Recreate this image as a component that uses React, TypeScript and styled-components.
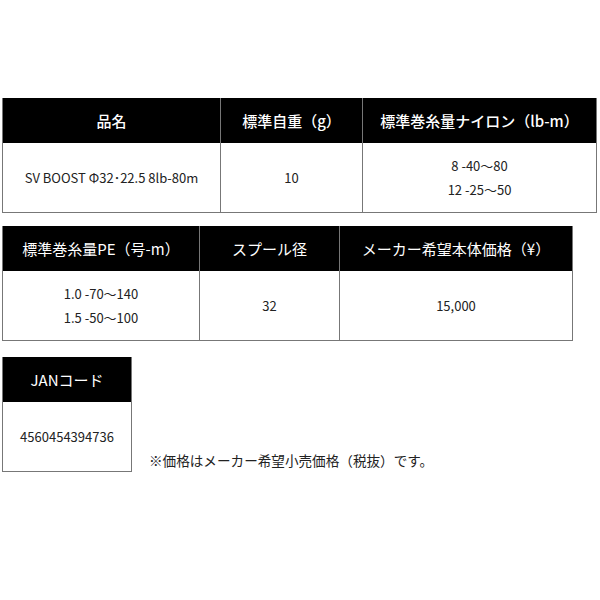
import React from 'react';
import styled, { createGlobalStyle } from 'styled-components';

const GlobalStyle = createGlobalStyle`
    html, body {
        margin: 0;
        padding: 0;
        background: #fff;
    }
    body {
        font-family: 'Noto Sans CJK JP', 'Noto Sans', sans-serif;
        color: #222;
    }
`;

const Page = styled('div')((): any => ({
    width: '600px',
    height: '600px',
    boxSizing: 'border-box',
    padding: '98px 0 0 2px',
    display: 'flex',
    flexDirection: 'column',
}));

const SpecTable = styled('table')<{ $width: number; $gap: number }>((p): any => ({
    width: `${p.$width}px`,
    borderCollapse: 'collapse',
    tableLayout: 'fixed',
    marginBottom: `${p.$gap}px`,
}));

const HeadCell = styled('th')<{ $bold?: boolean }>((p): any => ({
    height: '45px',
    padding: 0,
    background: '#000',
    color: '#fff',
    fontSize: '15px',
    fontWeight: p.$bold ? 500 : 400,
    textAlign: 'center',
    borderLeft: '1px solid #777',
    borderRight: '1px solid #777',
}));

const BodyCell = styled('td')((): any => ({
    height: '69px',
    padding: 0,
    fontSize: '13px',
    lineHeight: '24px',
    textAlign: 'center',
    border: '1px solid #777',
    borderTop: 'none',
}));

const BottomRow = styled('div')((): any => ({
    display: 'flex',
    alignItems: 'flex-end',
    gap: '17px',
}));

const Note = styled('p')((): any => ({
    margin: '0 0 2px',
    fontSize: '13.6px',
    lineHeight: '20px',
    color: '#222',
}));

function Lines({ items }: { items: string[] }): React.ReactElement {
    return (
        <>
            {items.map((t, i) => (
                <div key={i}>{t}</div>
            ))}
        </>
    );
}

function App(): React.ReactElement {
    return (
        <Page>
            <GlobalStyle />
            <SpecTable $width={594} $gap={13}>
                <colgroup>
                    <col style={{ width: '218px' }} />
                    <col style={{ width: '142px' }} />
                    <col style={{ width: '234px' }} />
                </colgroup>
                <thead>
                    <tr>
                        <HeadCell $bold>品名</HeadCell>
                        <HeadCell $bold>標準自重（g）</HeadCell>
                        <HeadCell $bold>標準巻糸量ナイロン（lb-m）</HeadCell>
                    </tr>
                </thead>
                <tbody>
                    <tr>
                        <BodyCell>SV BOOST Φ32･22.5 8lb-80m</BodyCell>
                        <BodyCell>10</BodyCell>
                        <BodyCell>
                            <Lines items={['8 -40～80', '12 -25～50']} />
                        </BodyCell>
                    </tr>
                </tbody>
            </SpecTable>

            <SpecTable $width={570} $gap={16}>
                <colgroup>
                    <col style={{ width: '197px' }} />
                    <col style={{ width: '140px' }} />
                    <col style={{ width: '233px' }} />
                </colgroup>
                <thead>
                    <tr>
                        <HeadCell>標準巻糸量PE（号-m）</HeadCell>
                        <HeadCell>スプール径</HeadCell>
                        <HeadCell>メーカー希望本体価格（¥）</HeadCell>
                    </tr>
                </thead>
                <tbody>
                    <tr>
                        <BodyCell>
                            <Lines items={['1.0 -70～140', '1.5 -50～100']} />
                        </BodyCell>
                        <BodyCell>32</BodyCell>
                        <BodyCell>15,000</BodyCell>
                    </tr>
                </tbody>
            </SpecTable>

            <BottomRow>
                <SpecTable $width={130} $gap={0}>
                    <thead>
                        <tr>
                            <HeadCell>JANコード</HeadCell>
                        </tr>
                    </thead>
                    <tbody>
                        <tr>
                            <BodyCell>4560454394736</BodyCell>
                        </tr>
                    </tbody>
                </SpecTable>
                <Note>※価格はメーカー希望小売価格（税抜）です。</Note>
            </BottomRow>
        </Page>
    );
}

export default App;
